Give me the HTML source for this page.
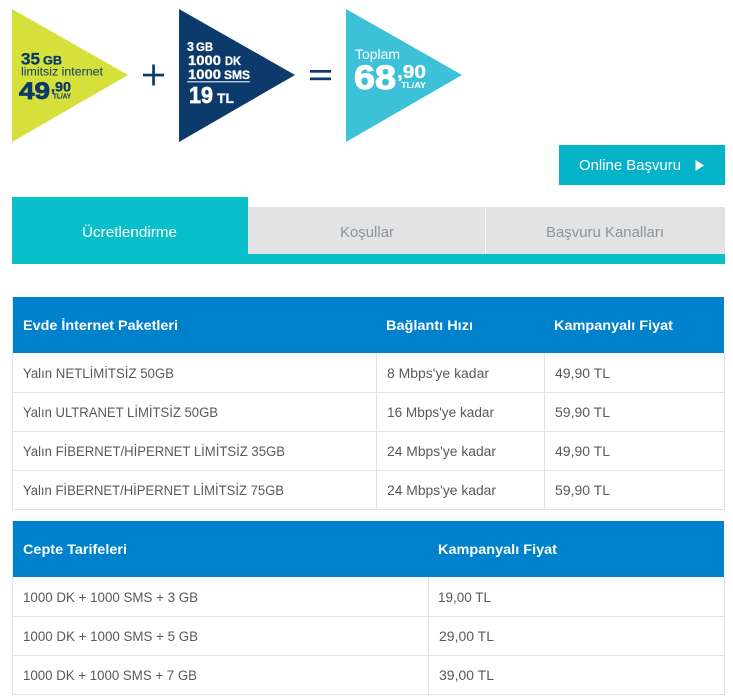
<!DOCTYPE html>
<html><head><meta charset="utf-8"><style>
html,body{margin:0;padding:0;background:#fff;width:733px;height:700px;overflow:hidden}
svg{display:block}
text{font-family:"Liberation Sans",sans-serif}
.h{font-size:14px;font-weight:700;fill:#fff}
.c{font-size:13.5px;fill:#595959}
.t{font-size:15px;fill:#8a949e}
.n{fill:#0b3a6b;font-weight:700;stroke:#0b3a6b;stroke-width:.35}
.w{fill:#fff;font-weight:700;stroke:#fff;stroke-width:.3}
</style></head><body>
<svg width="733" height="700" viewBox="0 0 733 700" xmlns="http://www.w3.org/2000/svg">
<polygon points="12,9 128,75 12,142" fill="#d5e03a"/>
<polygon points="179,9 295,75 179,142" fill="#0b3a6b"/>
<polygon points="346,9 462,75 346,142" fill="#3cc1d8"/>
<rect x="143" y="73.7" width="21" height="2.7" fill="#0b3a6b"/><rect x="152.2" y="64.5" width="2.7" height="21" fill="#0b3a6b"/>
<rect x="310" y="70" width="21" height="2.7" fill="#0b3a6b"/><rect x="310" y="77.5" width="21" height="2.7" fill="#0b3a6b"/>

<text class="n" x="21" y="64.5" font-size="17" textLength="19" lengthAdjust="spacingAndGlyphs">35</text>
<text class="n" x="43" y="64.5" font-size="11.5" textLength="19" lengthAdjust="spacingAndGlyphs">GB</text>
<text x="21" y="75.5" font-size="12" fill="#0b3a6b" textLength="82" lengthAdjust="spacingAndGlyphs">limitsiz internet</text>
<text class="n" x="19" y="99" font-size="24" style="stroke-width:.8" textLength="31" lengthAdjust="spacingAndGlyphs">49</text>
<text class="n" x="51" y="91.5" font-size="14" textLength="20" lengthAdjust="spacingAndGlyphs">,90</text>
<text class="n" x="53" y="98.5" font-size="7.5" style="stroke-width:.1" textLength="18" lengthAdjust="spacingAndGlyphs">TL/AY</text>

<text class="w" x="187" y="51" font-size="13" textLength="7" lengthAdjust="spacingAndGlyphs">3</text>
<text class="w" x="196" y="51" font-size="11.5" textLength="17" lengthAdjust="spacingAndGlyphs">GB</text>
<text class="w" x="188" y="65" font-size="14" textLength="33" lengthAdjust="spacingAndGlyphs">1000</text>
<text class="w" x="225" y="65" font-size="11.5" textLength="16" lengthAdjust="spacingAndGlyphs">DK</text>
<text class="w" x="188" y="79" font-size="14" textLength="33" lengthAdjust="spacingAndGlyphs">1000</text>
<text class="w" x="224" y="79" font-size="11.5" textLength="26" lengthAdjust="spacingAndGlyphs">SMS</text>
<rect x="187" y="81.3" width="63" height="1" fill="#fff"/>
<text class="w" x="189" y="103" font-size="23" style="stroke-width:.7" textLength="24" lengthAdjust="spacingAndGlyphs">19</text>
<text class="w" x="217" y="103" font-size="14" textLength="17" lengthAdjust="spacingAndGlyphs">TL</text>

<text x="355" y="59" font-size="13.5" fill="#fff" textLength="45" lengthAdjust="spacingAndGlyphs">Toplam</text>
<text class="w" x="354" y="89" font-size="34" style="stroke-width:1" textLength="42" lengthAdjust="spacingAndGlyphs">68</text>
<text class="w" x="397" y="78" font-size="18" textLength="29" lengthAdjust="spacingAndGlyphs">,90</text>
<text class="w" x="401" y="88" font-size="8.5" style="stroke-width:.1" textLength="25" lengthAdjust="spacingAndGlyphs">TL/AY</text>

<rect x="559" y="145" width="166" height="40" fill="#05b3c8"/>
<text x="579" y="170" font-size="15" fill="#fff" textLength="102" lengthAdjust="spacingAndGlyphs">Online Başvuru</text>
<polygon points="695.5,160 704,165.5 695.5,171" fill="#fff"/>

<rect x="12" y="197" width="236" height="67" fill="#08bfca"/>
<rect x="248" y="254" width="477" height="10" fill="#08bfca"/>
<rect x="248" y="207" width="237" height="47" fill="#e3e3e3"/>
<rect x="486" y="207" width="239" height="47" fill="#e3e3e3"/>
<text x="82" y="237" font-size="15" fill="#fff" textLength="95" lengthAdjust="spacingAndGlyphs">Ücretlendirme</text>
<text class="t" x="340" y="237" textLength="54" lengthAdjust="spacingAndGlyphs">Koşullar</text>
<text class="t" x="546" y="237" textLength="118" lengthAdjust="spacingAndGlyphs">Başvuru Kanalları</text>

<rect x="13" y="297" width="711" height="56" fill="#0081cc"/>
<g fill="none" stroke="#e3e3e3" stroke-width="1">
<path d="M12.5 297V509.5H724.5V353M12.5 392.5H724.5M12.5 431.5H724.5M12.5 470.5H724.5M376.5 353V509M544.5 353V509"/>
</g>
<text class="h" x="23" y="330" textLength="155" lengthAdjust="spacingAndGlyphs">Evde İnternet Paketleri</text>
<text class="h" x="386" y="330" textLength="87" lengthAdjust="spacingAndGlyphs">Bağlantı Hızı</text>
<text class="h" x="554" y="330" textLength="119" lengthAdjust="spacingAndGlyphs">Kampanyalı Fiyat</text>

<text class="c" x="23" y="378" textLength="151" lengthAdjust="spacingAndGlyphs">Yalın NETLİMİTSİZ 50GB</text>
<text class="c" x="387" y="378" textLength="102" lengthAdjust="spacingAndGlyphs">8 Mbps'ye kadar</text>
<text class="c" x="555" y="378" textLength="55" lengthAdjust="spacingAndGlyphs">49,90 TL</text>
<text class="c" x="23" y="417" textLength="195" lengthAdjust="spacingAndGlyphs">Yalın ULTRANET LİMİTSİZ 50GB</text>
<text class="c" x="387" y="417" textLength="107" lengthAdjust="spacingAndGlyphs">16 Mbps'ye kadar</text>
<text class="c" x="555" y="417" textLength="55" lengthAdjust="spacingAndGlyphs">59,90 TL</text>
<text class="c" x="23" y="456" textLength="262" lengthAdjust="spacingAndGlyphs">Yalın FİBERNET/HİPERNET LİMİTSİZ 35GB</text>
<text class="c" x="387" y="456" textLength="109" lengthAdjust="spacingAndGlyphs">24 Mbps'ye kadar</text>
<text class="c" x="555" y="456" textLength="55" lengthAdjust="spacingAndGlyphs">49,90 TL</text>
<text class="c" x="23" y="495" textLength="261" lengthAdjust="spacingAndGlyphs">Yalın FİBERNET/HİPERNET LİMİTSİZ 75GB</text>
<text class="c" x="387" y="495" textLength="109" lengthAdjust="spacingAndGlyphs">24 Mbps'ye kadar</text>
<text class="c" x="555" y="495" textLength="55" lengthAdjust="spacingAndGlyphs">59,90 TL</text>

<rect x="13" y="521" width="711" height="56" fill="#0081cc"/>
<g fill="none" stroke="#e3e3e3" stroke-width="1">
<path d="M12.5 521V694.5H724.5V577M12.5 616.5H724.5M12.5 655.5H724.5M428.5 577V694"/>
</g>
<text class="h" x="23" y="554" textLength="104" lengthAdjust="spacingAndGlyphs">Cepte Tarifeleri</text>
<text class="h" x="438" y="554" textLength="119" lengthAdjust="spacingAndGlyphs">Kampanyalı Fiyat</text>
<text class="c" x="23" y="602" textLength="175" lengthAdjust="spacingAndGlyphs">1000 DK + 1000 SMS + 3 GB</text>
<text class="c" x="438" y="602" textLength="53" lengthAdjust="spacingAndGlyphs">19,00 TL</text>
<text class="c" x="23" y="641" textLength="175" lengthAdjust="spacingAndGlyphs">1000 DK + 1000 SMS + 5 GB</text>
<text class="c" x="439" y="641" textLength="55" lengthAdjust="spacingAndGlyphs">29,00 TL</text>
<text class="c" x="23" y="680" textLength="174" lengthAdjust="spacingAndGlyphs">1000 DK + 1000 SMS + 7 GB</text>
<text class="c" x="439" y="680" textLength="55" lengthAdjust="spacingAndGlyphs">39,00 TL</text>
</svg>
</body></html>
